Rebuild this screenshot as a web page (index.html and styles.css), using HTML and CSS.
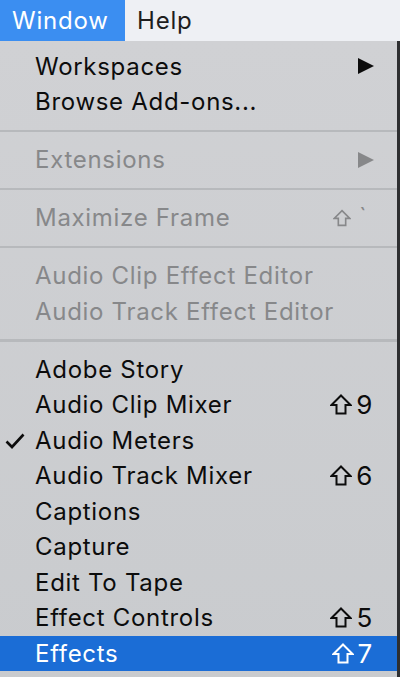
FILE: index.html
```html
<!DOCTYPE html>
<html lang="en">

<head>
    <meta charset="UTF-8">
    <meta name="viewport" content="width=device-width, initial-scale=1.0">
    <title>Window menu</title>
    <link rel="stylesheet" href="styles.css">
</head>

<body>
    <!-- Barra de menús -->
    <header class="menubar">
        <span class="menu-title active">Window</span>
        <span class="menu-title">Help</span>
    </header>

    <!-- Menú desplegable -->
    <ul class="menu">
        <li class="item"><span class="label">Workspaces</span><span class="shortcut"><span class="submenu"></span></span></li>
        <li class="item"><span class="label">Browse Add-ons...</span></li>
        <li class="separator"></li>
        <li class="item disabled"><span class="label">Extensions</span><span class="shortcut"><span class="submenu"></span></span></li>
        <li class="separator"></li>
        <li class="item disabled"><span class="label">Maximize Frame</span><span class="shortcut"><svg class="shift small" viewBox="0 0 22 21"><path d="M11 1.5 L20.5 11 H15.5 V19.5 H6.5 V11 H1.5 Z"/></svg><span class="key tick">`</span></span></li>
        <li class="separator"></li>
        <li class="item disabled"><span class="label">Audio Clip Effect Editor</span></li>
        <li class="item disabled"><span class="label">Audio Track Effect Editor</span></li>
        <li class="separator"></li>
        <li class="item"><span class="label">Adobe Story</span></li>
        <li class="item"><span class="label">Audio Clip Mixer</span><span class="shortcut"><svg class="shift" viewBox="0 0 22 21"><path d="M11 1.5 L20.5 11 H15.5 V19.5 H6.5 V11 H1.5 Z"/></svg><span class="key">9</span></span></li>
        <li class="item">
            <svg class="check" viewBox="0 0 20 16"><path d="M1.5 8.5 L7 14 L18.5 1.5"/></svg>
            <span class="label">Audio Meters</span>
        </li>
        <li class="item"><span class="label">Audio Track Mixer</span><span class="shortcut"><svg class="shift" viewBox="0 0 22 21"><path d="M11 1.5 L20.5 11 H15.5 V19.5 H6.5 V11 H1.5 Z"/></svg><span class="key">6</span></span></li>
        <li class="item"><span class="label">Captions</span></li>
        <li class="item"><span class="label">Capture</span></li>
        <li class="item"><span class="label">Edit To Tape</span></li>
        <li class="item"><span class="label">Effect Controls</span><span class="shortcut"><svg class="shift" viewBox="0 0 22 21"><path d="M11 1.5 L20.5 11 H15.5 V19.5 H6.5 V11 H1.5 Z"/></svg><span class="key">5</span></span></li>
        <li class="item selected"><span class="label">Effects</span><span class="shortcut"><svg class="shift" viewBox="0 0 22 21"><path d="M11 1.5 L20.5 11 H15.5 V19.5 H6.5 V11 H1.5 Z"/></svg><span class="key">7</span></span></li>
    </ul>
</body>

</html>
```

FILE: styles.css
```css
body {
    margin: 0;
    padding: 0;
    background-color: #2e2f31;
    font-family: 'Inter', 'Liberation Sans', sans-serif;
    font-size: 24px;
    color: #0c0c0c;
    height: 677px;
    overflow: hidden;
}

/* Barra de menús */
.menubar {
    display: flex;
    height: 41px;
    background-color: #eef0f4;
}

.menu-title {
    display: flex;
    align-items: center;
    padding: 0 17px 0 12px;
    font-size: 24px;
    letter-spacing: 0.8px;
    color: #1e1e1e;
}

.menu-title.active {
    width: 125px;
    box-sizing: border-box;
    background-color: #3b8ef1;
    color: #fff;
}

/* Menú desplegable */
.menu {
    list-style: none;
    margin: 0;
    padding: 7.5px 0 8px;
    width: 397px;
    background: linear-gradient(180deg, #d0d1d4 0%, #c9cbce 100%);
}

.item {
    position: relative;
    display: flex;
    align-items: center;
    height: 35.5px;
    padding: 0 24px 0 35px;
    letter-spacing: 0.7px;
}

.item .label {
    flex: 1;
    white-space: nowrap;
}

.item.disabled {
    color: #87888a;
}

.item.selected {
    background-color: #1b6dd6;
    color: #fff;
}

.separator {
    height: 2.5px;
    margin: 10px 0;
    background-color: #b7b9bc;
}

.shortcut {
    display: flex;
    align-items: center;
}

.shift {
    width: 22px;
    height: 21px;
    fill: none;
    stroke: currentColor;
    stroke-width: 2;
}

.shift.small {
    width: 18px;
    height: 18px;
}

.key {
    margin-left: 4px;
    font-size: 26px;
}

.key.tick {
    align-self: flex-start;
    margin-top: -4px;
    margin-left: 8px;
    margin-right: 6px;
    font-size: 22px;
}

.submenu {
    width: 0;
    height: 0;
    margin-right: -1px;
    border-top: 8.5px solid transparent;
    border-bottom: 8.5px solid transparent;
    border-left: 16px solid currentColor;
}

.check {
    position: absolute;
    left: 5px;
    top: 10px;
    width: 20px;
    height: 16px;
    fill: none;
    stroke: #0c0c0c;
    stroke-width: 2.6;
}
```
